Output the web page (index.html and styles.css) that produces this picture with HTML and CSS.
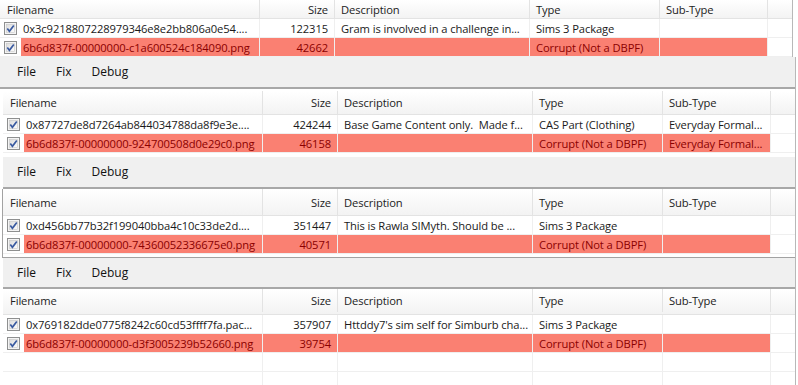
FILE: index.html
```html
<!DOCTYPE html>
<html lang="en">
<head>
  <meta charset="UTF-8">
  <meta name="viewport" content="width=device-width, initial-scale=1.0">
  <title>Package Scanner - Corrupt Files</title>
  <link rel="stylesheet" href="styles.css">
</head>
<body>
  <!-- Checkbox glyph, reused by every row -->
  <svg width="0" height="0" style="position:absolute">
    <defs>
      <linearGradient id="box-fill" x1="0" y1="0" x2="1" y2="1">
        <stop offset="0" stop-color="#dcdcdc"/>
        <stop offset="1" stop-color="#fdfdfd"/>
      </linearGradient>
      <symbol id="check" viewBox="0 0 13 13">
        <rect x="0.5" y="0.5" width="12" height="12" fill="#f4f4f4" stroke="#8e8f8f"/>
        <rect x="2.5" y="2.5" width="8" height="8" fill="url(#box-fill)" stroke="#c6c6c6" stroke-width="0.6"/>
        <path d="M3.3 6.6 L5.4 9.3 L9.8 3.4" fill="none" stroke="#3a5aa0" stroke-width="1.7"/>
      </symbol>
    </defs>
  </svg>

  <div class="stack">
    <!-- Pane 1 (top cut off) -->
    <section class="pane pane-first">
      <div class="list">
        <div class="list-head head-short">
          <div class="hcell hname">Filename</div>
          <div class="hcell hsize">Size</div>
          <div class="hcell">Description</div>
          <div class="hcell">Type</div>
          <div class="hcell">Sub-Type</div>
          <div class="hcell hfill"></div>
        </div>
        <div class="row">
          <div class="cell ccheck"><svg width="13" height="13"><use href="#check"/></svg></div>
          <div class="cell">0x3c9218807228979346e8e2bb806a0e54....</div>
          <div class="cell csize">122315</div>
          <div class="cell">Gram is involved in a challenge in...</div>
          <div class="cell">Sims 3 Package</div>
          <div class="cell"></div>
          <div class="cell cfill"></div>
        </div>
        <div class="row bad">
          <div class="cell ccheck"><svg width="13" height="13"><use href="#check"/></svg></div>
          <div class="cell">6b6d837f-00000000-c1a600524c184090.png</div>
          <div class="cell csize">42662</div>
          <div class="cell"></div>
          <div class="cell">Corrupt (Not a DBPF)</div>
          <div class="cell"></div>
          <div class="cell cfill"></div>
        </div>
      </div>
    </section>

    <!-- Pane 2 -->
    <section class="pane pane-two">
      <nav class="menu"><span>File</span><span>Fix</span><span>Debug</span></nav>
      <div class="list">
        <div class="list-head">
          <div class="hcell hname">Filename</div>
          <div class="hcell hsize">Size</div>
          <div class="hcell">Description</div>
          <div class="hcell">Type</div>
          <div class="hcell">Sub-Type</div>
          <div class="hcell hfill"></div>
        </div>
        <div class="row">
          <div class="cell ccheck"><svg width="13" height="13"><use href="#check"/></svg></div>
          <div class="cell">0x87727de8d7264ab844034788da8f9e3e....</div>
          <div class="cell csize">424244</div>
          <div class="cell">Base Game Content only.&nbsp; Made f...</div>
          <div class="cell">CAS Part (Clothing)</div>
          <div class="cell">Everyday Formal...</div>
          <div class="cell cfill"></div>
        </div>
        <div class="row bad">
          <div class="cell ccheck"><svg width="13" height="13"><use href="#check"/></svg></div>
          <div class="cell">6b6d837f-00000000-924700508d0e29c0.png</div>
          <div class="cell csize">46158</div>
          <div class="cell"></div>
          <div class="cell">Corrupt (Not a DBPF)</div>
          <div class="cell">Everyday Formal...</div>
          <div class="cell cfill"></div>
        </div>
      </div>
    </section>

    <!-- Pane 3 -->
    <section class="pane pane-three">
      <nav class="menu"><span>File</span><span>Fix</span><span>Debug</span></nav>
      <div class="list list-boxed">
        <div class="list-head">
          <div class="hcell hname">Filename</div>
          <div class="hcell hsize">Size</div>
          <div class="hcell">Description</div>
          <div class="hcell">Type</div>
          <div class="hcell">Sub-Type</div>
          <div class="hcell hfill"></div>
        </div>
        <div class="row">
          <div class="cell ccheck"><svg width="13" height="13"><use href="#check"/></svg></div>
          <div class="cell">0xd456bb77b32f199040bba4c10c33de2d....</div>
          <div class="cell csize">351447</div>
          <div class="cell">This is Rawla SIMyth. Should be ...</div>
          <div class="cell">Sims 3 Package</div>
          <div class="cell"></div>
          <div class="cell cfill"></div>
        </div>
        <div class="row bad">
          <div class="cell ccheck"><svg width="13" height="13"><use href="#check"/></svg></div>
          <div class="cell">6b6d837f-00000000-74360052336675e0.png</div>
          <div class="cell csize">40571</div>
          <div class="cell"></div>
          <div class="cell">Corrupt (Not a DBPF)</div>
          <div class="cell"></div>
          <div class="cell cfill"></div>
        </div>
      </div>
    </section>

    <!-- Pane 4 -->
    <section class="pane pane-four">
      <nav class="menu"><span>File</span><span>Fix</span><span>Debug</span></nav>
      <div class="list">
        <div class="list-head">
          <div class="hcell hname">Filename</div>
          <div class="hcell hsize">Size</div>
          <div class="hcell">Description</div>
          <div class="hcell">Type</div>
          <div class="hcell">Sub-Type</div>
          <div class="hcell hfill"></div>
        </div>
        <div class="row">
          <div class="cell ccheck"><svg width="13" height="13"><use href="#check"/></svg></div>
          <div class="cell">0x769182dde0775f8242c60cd53ffff7fa.pac...</div>
          <div class="cell csize">357907</div>
          <div class="cell">Httddy7's sim self for Simburb cha...</div>
          <div class="cell">Sims 3 Package</div>
          <div class="cell"></div>
          <div class="cell cfill"></div>
        </div>
        <div class="row bad">
          <div class="cell ccheck"><svg width="13" height="13"><use href="#check"/></svg></div>
          <div class="cell">6b6d837f-00000000-d3f3005239b52660.png</div>
          <div class="cell csize">39754</div>
          <div class="cell"></div>
          <div class="cell">Corrupt (Not a DBPF)</div>
          <div class="cell"></div>
          <div class="cell cfill"></div>
        </div>
        <div class="row empty">
          <div class="cell ccheck"></div><div class="cell"></div><div class="cell"></div><div class="cell"></div><div class="cell"></div><div class="cell"></div><div class="cell cfill"></div>
        </div>
        <div class="row empty">
          <div class="cell ccheck"></div><div class="cell"></div><div class="cell"></div><div class="cell"></div><div class="cell"></div><div class="cell"></div><div class="cell cfill"></div>
        </div>
      </div>
    </section>
  </div>
</body>
</html>
```

FILE: styles.css
```css
:root {
  --grid-line: #efefef;
  --head-line: #e3e3e3;
  --menu-bg: #f0f0f0;
  --frame: #a2a2a2;
  --corrupt-bg: #fa8072;
  --corrupt-text: #8b0000;
  --text-color: #1a1a1a;
}

* {
  margin: 0;
  padding: 0;
  box-sizing: border-box;
}

body {
  width: 798px;
  height: 385px;
  overflow: hidden;
  background: #ffffff;
  color: var(--text-color);
  font-family: 'Open Sans', 'Noto Sans', 'Liberation Sans', sans-serif;
  font-size: 11.2px;
  letter-spacing: -0.1px;
}

.stack {
  display: flex;
  flex-direction: column;
}

/* Each pane is one window, stacked with a slight horizontal shift */
.pane {
  width: 793px;
  border-right: 1px solid #b8b8b8;
}

.pane-first {
  margin-left: 0;
}

.pane-two,
.pane-three,
.pane-four {
  margin-left: 3px;
}

.pane-two {
  padding-bottom: 4px;
}

/* Menu strip */
.menu {
  display: flex;
  align-items: center;
  height: 32px;
  padding-left: 4px;
  padding-bottom: 1px;
  background: var(--menu-bg);
  border-bottom: 2px solid #a8a8a8;
  color: #111;
  font-size: 12px;
  letter-spacing: 0;
}

.menu span {
  padding: 0 10px;
}

.pane-two .menu {
  margin-left: -3px;
  padding-left: 7px;
}

.pane-four .menu {
  height: 31px;
}

/* List view */
.list {
  display: flex;
  flex-direction: column;
}

.pane-two .list {
  padding-top: 2px;
}

.list-boxed {
  border-left: 1px solid var(--frame);
  border-bottom: 1px solid var(--frame);
  padding-bottom: 3px;
  margin-left: -1px;
}

.list-head,
.row {
  display: grid;
  grid-template-columns: 21px 239px 75px 195px 130px 108px 1fr;
}

.list-head {
  height: 24px;
  background: linear-gradient(#ffffff, #f3f3f3);
  border-bottom: 1px solid var(--head-line);
  color: #222;
}

.head-short {
  height: 19px;
}

.pane-three .list-head {
  height: 27px;
}

.pane-four .list-head {
  height: 26px;
  padding-bottom: 2px;
}

.hcell {
  display: flex;
  align-items: center;
  padding: 0 6px;
  border-right: 1px solid var(--head-line);
  white-space: nowrap;
  overflow: hidden;
}

.hname {
  grid-column: span 2;
  padding-left: 7px;
}

.hsize {
  justify-content: flex-end;
}

.hfill {
  border-right: none;
}

.row {
  height: 19px;
  border-bottom: 1px solid var(--grid-line);
}

.cell {
  display: flex;
  align-items: center;
  padding: 0 6px;
  border-right: 1px solid var(--grid-line);
  white-space: nowrap;
  overflow: hidden;
}

.ccheck {
  padding: 0 0 0 4px;
  border-right: none;
}

.ccheck + .cell {
  padding-left: 2px;
}

.csize {
  justify-content: flex-end;
}

.cfill {
  border-right: none;
}

/* Rows flagged as corrupt */
.row.bad .cell {
  background: var(--corrupt-bg);
  color: var(--corrupt-text);
}

.row.bad .ccheck,
.row.bad .cfill {
  background: #ffffff;
}
```
